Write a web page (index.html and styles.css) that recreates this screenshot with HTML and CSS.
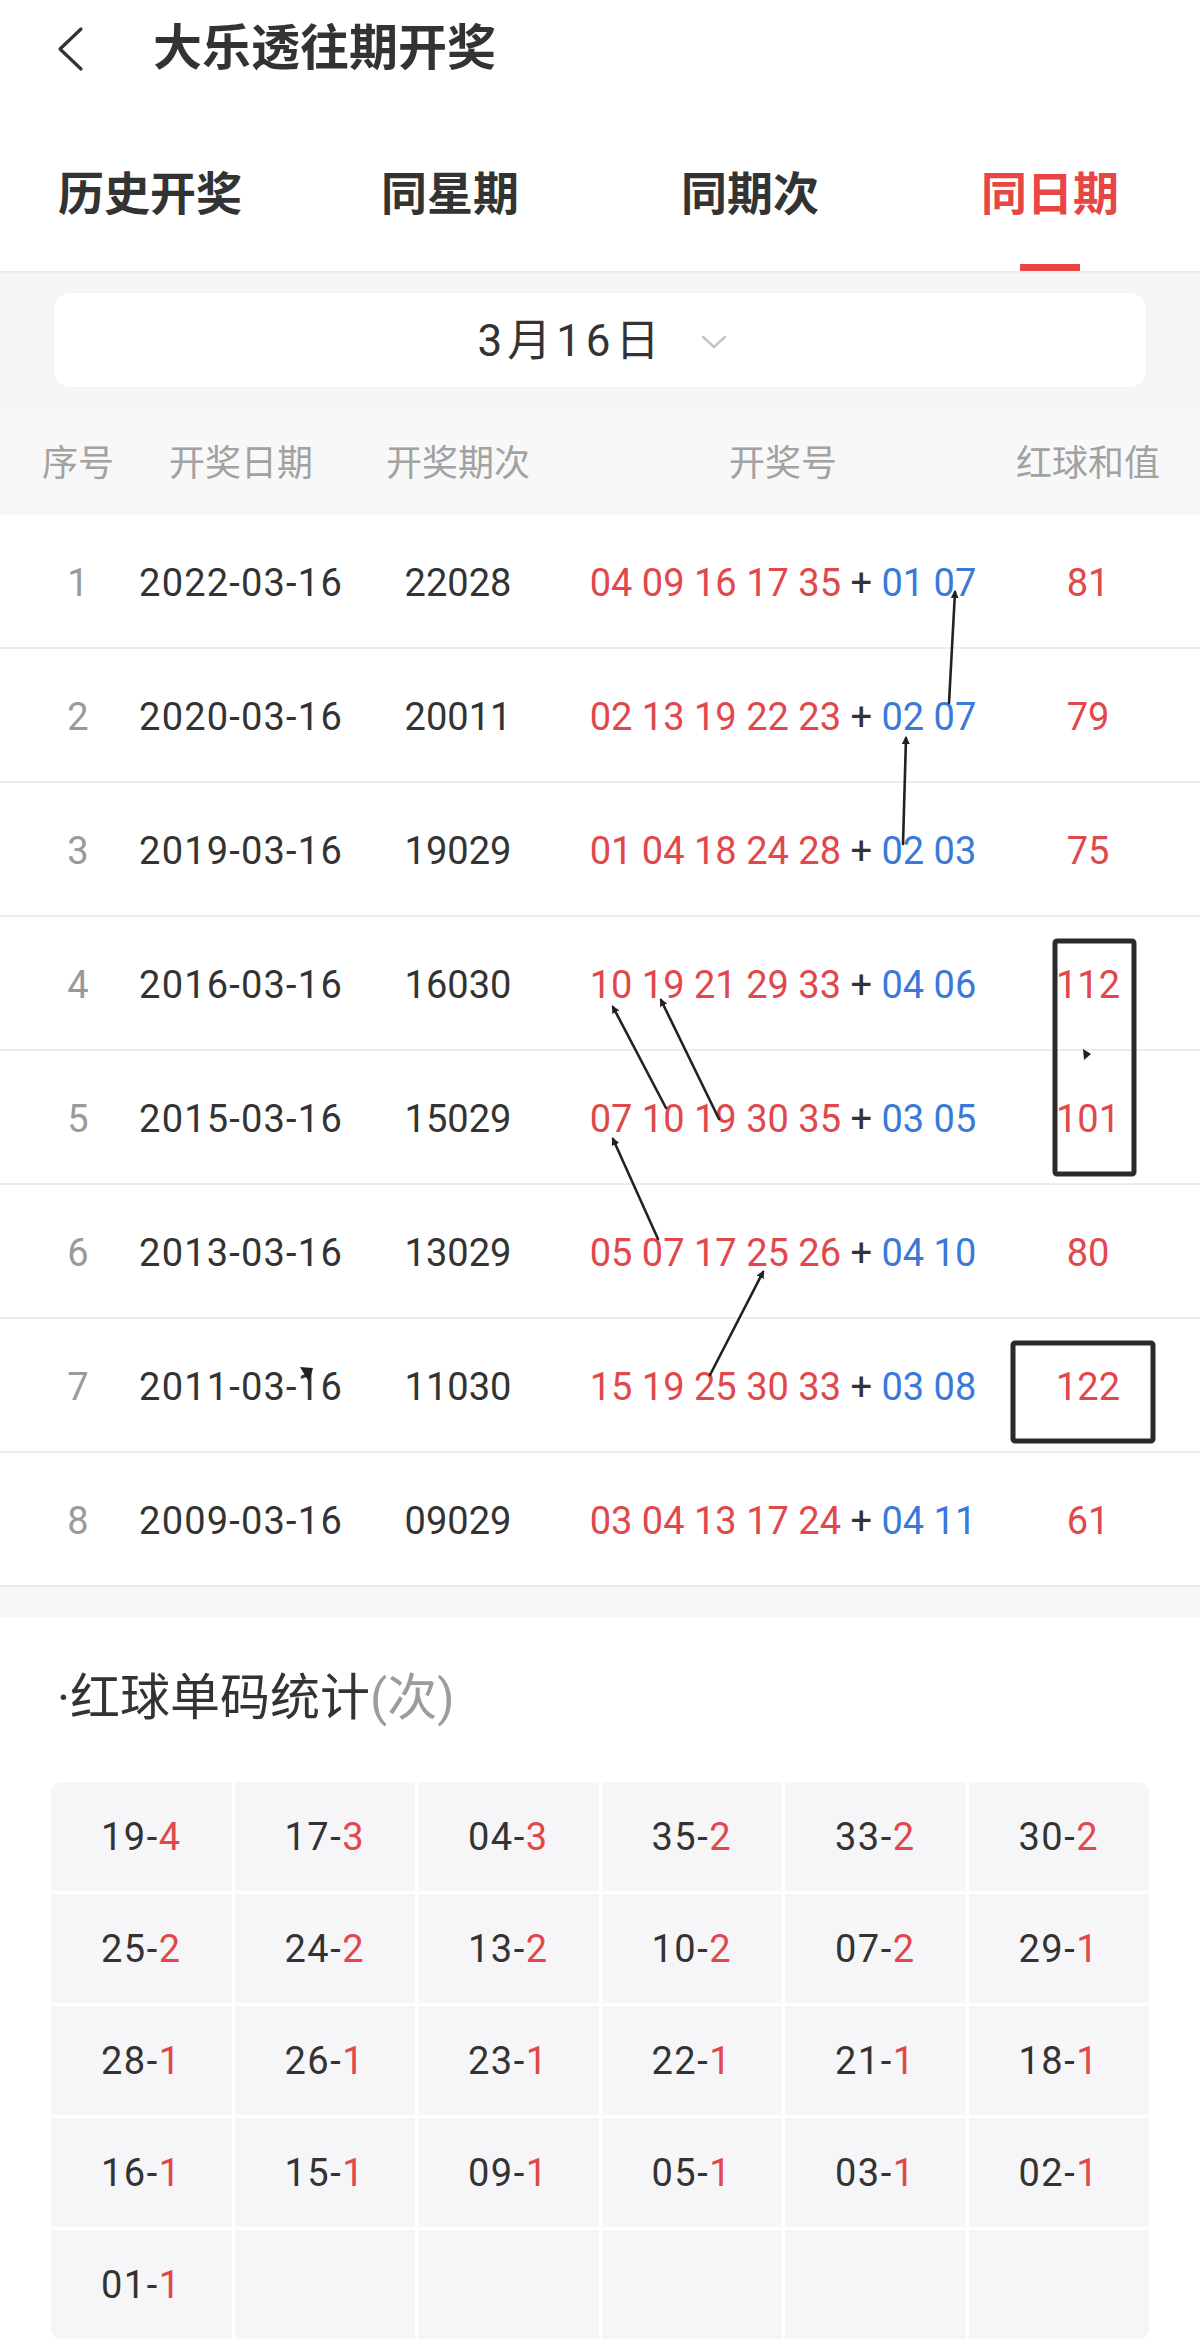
FILE: index.html
```html
<!DOCTYPE html>
<html lang="zh-CN">
<head>
<meta charset="utf-8">
<title>大乐透往期开奖</title>
<link rel="stylesheet" href="styles.css">
</head>
<body>
<div class="page">
  <header class="topbar">
    <svg class="back" width="30" height="46" viewBox="0 0 30 46"><path d="M25 3 L4 23 L25 43" fill="none" stroke="#333" stroke-width="3.2" stroke-linecap="round" stroke-linejoin="round"/></svg>
    <h1 class="title">大乐透往期开奖</h1>
  </header>
  <nav class="tabs">
    <div class="tab"><span class="tab-text">历史开奖</span><span class="bar"></span></div>
    <div class="tab"><span class="tab-text">同星期</span><span class="bar"></span></div>
    <div class="tab"><span class="tab-text">同期次</span><span class="bar"></span></div>
    <div class="tab active"><span class="tab-text">同日期</span><span class="bar"></span></div>
  </nav>
  <section class="filter">
    <div class="picker">
      <span class="picker-text">3月16日</span>
      <svg class="picker-arrow" width="26" height="16" viewBox="0 0 26 16"><path d="M2 3 L13 13 L24 3" fill="none" stroke="#c4c4c4" stroke-width="2.4" stroke-linecap="round" stroke-linejoin="round"/></svg>
    </div>
  </section>
  <section class="table">
    <div class="row head">
      <div>序号</div><div>开奖日期</div><div>开奖期次</div><div>开奖号</div><div>红球和值</div>
    </div>
    <div class="row">
      <div class="idx">1</div><div class="date">2022-03-16</div><div class="issue">22028</div>
      <div class="nums"><span class="r">04 09 16 17 35</span>&nbsp;+&nbsp;<span class="b">01 07</span></div><div class="sum">81</div>
    </div>
    <div class="row">
      <div class="idx">2</div><div class="date">2020-03-16</div><div class="issue">20011</div>
      <div class="nums"><span class="r">02 13 19 22 23</span>&nbsp;+&nbsp;<span class="b">02 07</span></div><div class="sum">79</div>
    </div>
    <div class="row">
      <div class="idx">3</div><div class="date">2019-03-16</div><div class="issue">19029</div>
      <div class="nums"><span class="r">01 04 18 24 28</span>&nbsp;+&nbsp;<span class="b">02 03</span></div><div class="sum">75</div>
    </div>
    <div class="row">
      <div class="idx">4</div><div class="date">2016-03-16</div><div class="issue">16030</div>
      <div class="nums"><span class="r">10 19 21 29 33</span>&nbsp;+&nbsp;<span class="b">04 06</span></div><div class="sum">112</div>
    </div>
    <div class="row">
      <div class="idx">5</div><div class="date">2015-03-16</div><div class="issue">15029</div>
      <div class="nums"><span class="r">07 10 19 30 35</span>&nbsp;+&nbsp;<span class="b">03 05</span></div><div class="sum">101</div>
    </div>
    <div class="row">
      <div class="idx">6</div><div class="date">2013-03-16</div><div class="issue">13029</div>
      <div class="nums"><span class="r">05 07 17 25 26</span>&nbsp;+&nbsp;<span class="b">04 10</span></div><div class="sum">80</div>
    </div>
    <div class="row">
      <div class="idx">7</div><div class="date">2011-03-16</div><div class="issue">11030</div>
      <div class="nums"><span class="r">15 19 25 30 33</span>&nbsp;+&nbsp;<span class="b">03 08</span></div><div class="sum">122</div>
    </div>
    <div class="row">
      <div class="idx">8</div><div class="date">2009-03-16</div><div class="issue">09029</div>
      <div class="nums"><span class="r">03 04 13 17 24</span>&nbsp;+&nbsp;<span class="b">04 11</span></div><div class="sum">61</div>
    </div>
  </section>
  <div class="spacer"></div>
  <section class="stats">
    <h2 class="stats-title">·红球单码统计<span class="unit">(次)</span></h2>
    <div class="grid">
      <div class="cell">19-<em>4</em></div><div class="cell">17-<em>3</em></div><div class="cell">04-<em>3</em></div><div class="cell">35-<em>2</em></div><div class="cell">33-<em>2</em></div><div class="cell">30-<em>2</em></div>
      <div class="cell">25-<em>2</em></div><div class="cell">24-<em>2</em></div><div class="cell">13-<em>2</em></div><div class="cell">10-<em>2</em></div><div class="cell">07-<em>2</em></div><div class="cell">29-<em>1</em></div>
      <div class="cell">28-<em>1</em></div><div class="cell">26-<em>1</em></div><div class="cell">23-<em>1</em></div><div class="cell">22-<em>1</em></div><div class="cell">21-<em>1</em></div><div class="cell">18-<em>1</em></div>
      <div class="cell">16-<em>1</em></div><div class="cell">15-<em>1</em></div><div class="cell">09-<em>1</em></div><div class="cell">05-<em>1</em></div><div class="cell">03-<em>1</em></div><div class="cell">02-<em>1</em></div>
      <div class="cell">01-<em>1</em></div><div class="cell"></div><div class="cell"></div><div class="cell"></div><div class="cell"></div><div class="cell"></div>
    </div>
  </section>

  <svg class="marks" width="1200" height="2344" viewBox="0 0 1200 2344">
    <defs>
      <marker id="ah" markerWidth="8" markerHeight="8" refX="6" refY="4" orient="auto" markerUnits="userSpaceOnUse" viewBox="0 0 8 8">
        <path d="M0 0 L8 4 L0 8 Z" fill="#222"/>
      </marker>
    </defs>
    <g stroke="#222" stroke-width="2.6" fill="none" stroke-linecap="round">
      <line x1="949" y1="703" x2="955" y2="592" marker-end="url(#ah)"/>
      <line x1="903" y1="844" x2="906" y2="738" marker-end="url(#ah)"/>
      <line x1="666" y1="1108" x2="613" y2="1007" marker-end="url(#ah)"/>
      <line x1="719" y1="1119" x2="661" y2="1000" marker-end="url(#ah)"/>
      <line x1="658" y1="1239" x2="613" y2="1139" marker-end="url(#ah)"/>
      <line x1="710" y1="1375" x2="763" y2="1272" marker-end="url(#ah)"/>
    </g>
    <g stroke="#2b2b2b" stroke-width="5" fill="none" stroke-linejoin="round">
      <rect x="1055" y="941" width="79" height="233" rx="2"/>
      <rect x="1013" y="1343" width="140" height="98" rx="2"/>
    </g>
    <path d="M1083 1049 L1091 1054 L1084 1060 Z" fill="#222"/>
    <path d="M300 1367 L313 1368 L309 1382 Z" fill="#222"/>
  </svg>
</div>
</body>
</html>
```

FILE: styles.css
```css
* { box-sizing: border-box; }
html, body { margin: 0; padding: 0; background: #ffffff; }
body {
  font-family: "Roboto", "Noto Sans CJK SC", "Noto Sans", sans-serif;
  color: #333333;
  width: 1200px;
}
.page { position: relative; width: 1200px; min-height: 2344px; background: #ffffff; overflow: hidden; }

.topbar {
  height: 98px;
  display: flex;
  align-items: center;
  padding-left: 56px;
}
.back { display: block; margin-right: 67px; }
.title {
  margin: 0;
  font-size: 49px;
  font-weight: 700;
  color: #333333;
  line-height: 60px;
}

.tabs {
  height: 175px;
  display: grid;
  grid-template-columns: repeat(4, 1fr);
  border-bottom: 2px solid #ececec;
}
.tab {
  display: flex;
  flex-direction: column;
  align-items: center;
  padding-top: 70px;
}
.tab-text {
  font-size: 46px;
  font-weight: 700;
  line-height: 52px;
  color: #333333;
}
.bar { width: 60px; height: 7px; margin-top: 44px; background: transparent; }
.tab.active .tab-text { color: #e84545; }
.tab.active .bar { background: #e84545; }

.filter {
  background: #f5f5f7;
  padding: 20px 54px 21px;
}
.picker {
  height: 94px;
  background: #ffffff;
  border-radius: 16px;
  display: flex;
  align-items: center;
  justify-content: center;
  gap: 36px;
  padding-left: 4px;
  padding-top: 2px;
}
.picker-text {
  font-size: 44px;
  letter-spacing: 5px;
  color: #333333;
  line-height: 50px;
}
.picker-arrow { display: block; margin-top: 2px; }

.table { background: #ffffff; }
.row {
  display: grid;
  grid-template-columns: 156px 170px 264px 386px 1fr;
  align-items: center;
  height: 134px;
  padding-top: 4px;
  border-bottom: 2px solid #ececec;
  font-size: 38px;
}
.row > div {
  white-space: nowrap;
  display: flex;
  justify-content: center;
  min-width: 0;
}
.row.head {
  height: 107px;
  background: #f8f8f8;
  border-bottom: none;
  color: #a2a2a2;
  font-size: 36px;
  padding-top: 0;
  padding-bottom: 4px;
}
.idx { color: #9a9a9a; }
.date { color: #333333; letter-spacing: 1.2px; }
.issue { color: #333333; }
.nums { color: #333333; }
.r { color: #e0484b; }
.b { color: #3b79d8; }
.sum { color: #e0484b; }

.spacer { height: 30px; background: #f7f7f7; }

.stats { background: #ffffff; padding: 50px 51px 0; }
.stats-title {
  margin: 0 0 53px 6px;
  font-size: 50px;
  font-weight: 400;
  line-height: 62px;
  color: #333333;
}
.unit { color: #9c9c9c; }
.grid {
  display: grid;
  grid-template-columns: repeat(6, 1fr);
  grid-auto-rows: 109px;
  gap: 3px;
  border-radius: 10px;
  overflow: hidden;
}
.cell {
  background: #f6f6f9;
  display: flex;
  align-items: center;
  justify-content: center;
  font-size: 38px;
  letter-spacing: 1.5px;
  color: #333333;
}
.cell em { font-style: normal; color: #e0484b; }

.marks { position: absolute; top: 0; left: 0; pointer-events: none; }
```
